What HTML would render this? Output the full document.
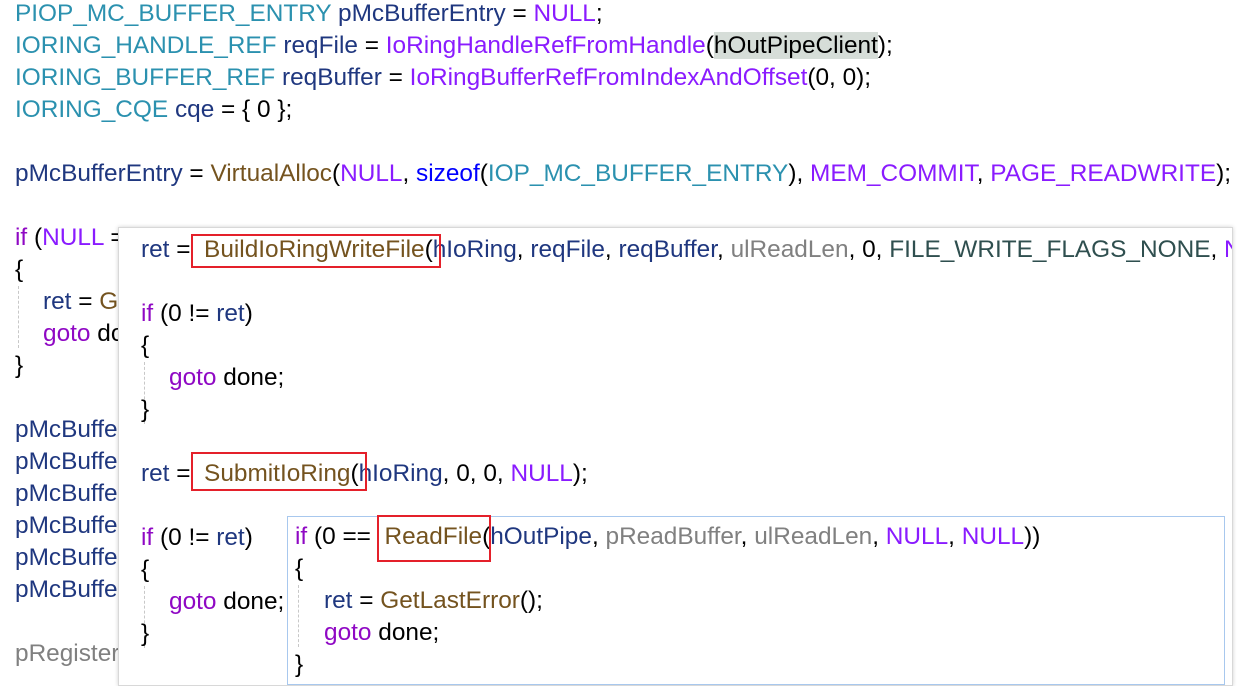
<!DOCTYPE html>
<html><head><meta charset="utf-8">
<style>
html,body{margin:0;padding:0;background:#fff;width:1247px;height:686px;overflow:hidden;position:relative}
body{font-family:"Liberation Sans","Noto Sans CJK SC",sans-serif;font-size:24.4px;color:#000}
.l{position:absolute;white-space:pre;line-height:32px;height:32px}
.t{color:#2b91af}.v{color:#1f377f}.m{color:#8a1bff}.f{color:#74531f}.k{color:#8f08c4}.b{color:#0000ff}.g{color:#808080}.d{color:#2f4f4f}
.hl{background:#d6ddd8}
.pop{position:absolute;background:#fff}
.box{position:absolute;border:2px solid #e4202a;box-sizing:border-box}
.guide{position:absolute;border-left:1px dashed #c8c8c8;width:0}
</style></head><body>
<div class="l" style="left:15px;top:-2px"><span class="t">PIOP_MC_BUFFER_ENTRY</span> <span class="v">pMcBufferEntry</span> = <span class="m">NULL</span>;</div>
<div class="l" style="left:15px;top:30px"><span class="t">IORING_HANDLE_REF</span> <span class="v">reqFile</span> = <span class="m">IoRingHandleRefFromHandle</span>(<span class="hl">hOutPipeClient</span>);</div>
<div class="l" style="left:15px;top:62px"><span class="t">IORING_BUFFER_REF</span> <span class="v">reqBuffer</span> = <span class="m">IoRingBufferRefFromIndexAndOffset</span>(0, 0);</div>
<div class="l" style="left:15px;top:94px"><span class="t">IORING_CQE</span> <span class="v">cqe</span> = { 0 };</div>
<div class="l" style="left:15px;top:158px"><span class="v">pMcBufferEntry</span> = <span class="f">VirtualAlloc</span>(<span class="m">NULL</span>, <span class="b">sizeof</span>(<span class="t">IOP_MC_BUFFER_ENTRY</span>), <span class="m">MEM_COMMIT</span>, <span class="m">PAGE_READWRITE</span>);</div>
<div class="l" style="left:15px;top:222px"><span class="k">if</span> (<span class="m">NULL</span> == </div>
<div class="l" style="left:15px;top:254px">{</div>
<div class="guide" style="left:18px;top:286px;height:62px"></div>
<div class="l" style="left:43px;top:286px"><span class="v">ret</span> = <span class="f">GetLastError</span>();</div>
<div class="l" style="left:43px;top:318px"><span class="k">goto</span> done;</div>
<div class="l" style="left:15px;top:350px">}</div>
<div class="l" style="left:15px;top:414px"><span class="v">pMcBufferEntry</span></div>
<div class="l" style="left:15px;top:446px"><span class="v">pMcBufferEntry</span></div>
<div class="l" style="left:15px;top:478px"><span class="v">pMcBufferEntry</span></div>
<div class="l" style="left:15px;top:510px"><span class="v">pMcBufferEntry</span></div>
<div class="l" style="left:15px;top:542px"><span class="v">pMcBufferEntry</span></div>
<div class="l" style="left:15px;top:574px"><span class="v">pMcBufferEntry</span></div>
<div class="l" style="left:15px;top:638px"><span class="g">pRegisteredBuffers</span></div>

<div class="pop" style="left:118px;top:227px;width:1113px;height:457px;border:1px solid #d8d8d8;box-shadow:0 0 4px rgba(0,0,0,.18);overflow:hidden">
 <div class="l" style="left:22px;top:6px"><span class="v">ret</span> =  <span class="f">BuildIoRingWriteFile</span>(<span class="v">hIoRing</span>, <span class="v">reqFile</span>, <span class="v">reqBuffer</span>, <span class="g">ulReadLen</span>, 0, <span class="d">FILE_WRITE_FLAGS_NONE</span>, <span class="m">NULL</span></div>
 <div class="l" style="left:22px;top:70px"><span class="k">if</span> (0 != <span class="v">ret</span>)</div>
 <div class="l" style="left:22px;top:102px">{</div>
 <div class="guide" style="left:25px;top:134px;height:62px"></div>
 <div class="l" style="left:50px;top:134px"><span class="k">goto</span> done;</div>
 <div class="l" style="left:22px;top:166px">}</div>
 <div class="l" style="left:22px;top:230px"><span class="v">ret</span> =  <span class="f">SubmitIoRing</span>(<span class="v">hIoRing</span>, 0, 0, <span class="m">NULL</span>);</div>
 <div class="l" style="left:22px;top:294px"><span class="k">if</span> (0 != <span class="v">ret</span>)</div>
 <div class="l" style="left:22px;top:326px">{</div>
 <div class="guide" style="left:25px;top:358px;height:62px"></div>
 <div class="l" style="left:50px;top:358px"><span class="k">goto</span> done;</div>
 <div class="l" style="left:22px;top:390px">}</div>
</div>
<div class="box" style="left:191px;top:234px;width:250px;height:34px"></div>
<div class="box" style="left:191px;top:452px;width:176px;height:39px"></div>

<div class="pop" style="left:287px;top:516px;width:936px;height:167px;border:1px solid #a8c8ee;overflow:hidden">
 <div class="l" style="left:7px;top:4px"><span class="k">if</span> (0 ==  <span class="f">ReadFile</span>(<span class="v">hOutPipe</span>, <span class="g">pReadBuffer</span>, <span class="g">ulReadLen</span>, <span class="m">NULL</span>, <span class="m">NULL</span>))</div>
 <div class="l" style="left:7px;top:36px">{</div>
 <div class="guide" style="left:10px;top:68px;height:62px"></div>
 <div class="l" style="left:36px;top:68px"><span class="v">ret</span> = <span class="f">GetLastError</span>();</div>
 <div class="l" style="left:36px;top:100px"><span class="k">goto</span> done;</div>
 <div class="l" style="left:7px;top:132px">}</div>
</div>
<div class="box" style="left:377px;top:515px;width:114px;height:47px"></div>
</body></html>
